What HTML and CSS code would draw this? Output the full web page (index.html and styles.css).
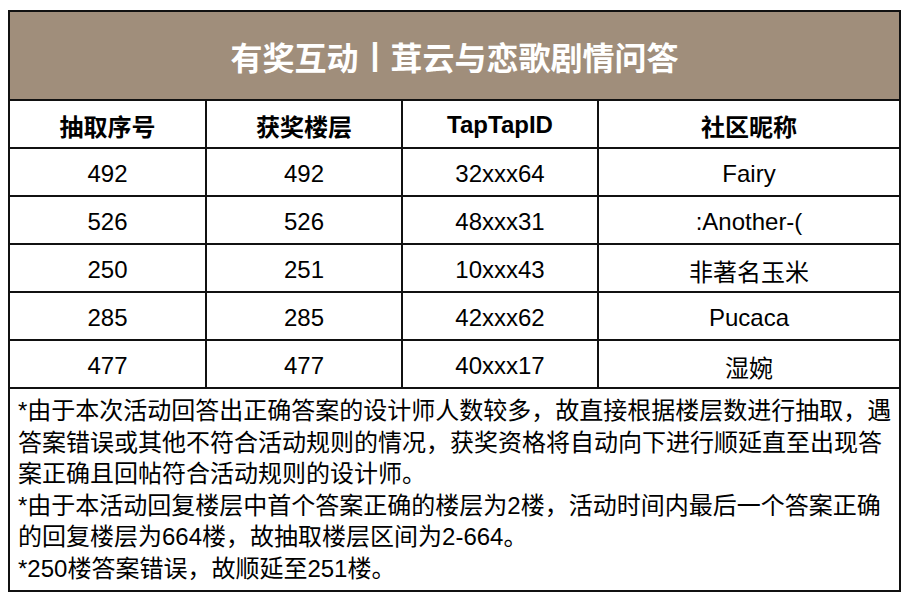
FILE: index.html
```html
<!DOCTYPE html>
<html lang="zh-CN">
<head>
<meta charset="utf-8">
<title>有奖互动｜茸云与恋歌剧情问答</title>
<link rel="stylesheet" href="styles.css">
</head>
<body>
<div class="sheet">
  <div class="title">有奖互动<span class="sep">|</span>茸云与恋歌剧情问答</div>
  <div class="grid">
    <div class="cell head">抽取序号</div>
    <div class="cell head">获奖楼层</div>
    <div class="cell head">TapTapID</div>
    <div class="cell head last">社区昵称</div>

    <div class="cell">492</div>
    <div class="cell">492</div>
    <div class="cell">32xxx64</div>
    <div class="cell last">Fairy</div>

    <div class="cell">526</div>
    <div class="cell">526</div>
    <div class="cell">48xxx31</div>
    <div class="cell last">:Another-(</div>

    <div class="cell">250</div>
    <div class="cell">251</div>
    <div class="cell">10xxx43</div>
    <div class="cell last">非著名玉米</div>

    <div class="cell">285</div>
    <div class="cell">285</div>
    <div class="cell">42xxx62</div>
    <div class="cell last">Pucaca</div>

    <div class="cell">477</div>
    <div class="cell">477</div>
    <div class="cell">40xxx17</div>
    <div class="cell last">湿婉</div>
  </div>
  <div class="note">
    <p>*由于本次活动回答出正确答案的设计师人数较多，故直接根据楼层数进行抽取，遇答案错误或其他不符合活动规则的情况，获奖资格将自动向下进行顺延直至出现答案正确且回帖符合活动规则的设计师。</p>
    <p>*由于本活动回复楼层中首个答案正确的楼层为2楼，活动时间内最后一个答案正确的回复楼层为664楼，故抽取楼层区间为2-664。</p>
    <p>*250楼答案错误，故顺延至251楼。</p>
  </div>
</div>
</body>
</html>
```

FILE: styles.css
```css
html, body {
  margin: 0;
  padding: 0;
  background: #ffffff;
}

body {
  font-family: "Liberation Sans", "Noto Sans CJK SC", sans-serif;
  color: #000000;
}

.sheet {
  margin: 10px 0 0 8px;
  width: 893px;
  border: 2px solid #111111;
  box-sizing: border-box;
}

.title {
  height: 87px;
  background: #a08e7b;
  color: #ffffff;
  font-size: 32px;
  font-weight: bold;
  display: flex;
  align-items: center;
  justify-content: center;
  border-bottom: 2px solid #111111;
}

.title .sep {
  font-family: "Liberation Sans", sans-serif;
  font-weight: bold;
  margin: 0 11px 0 12px;
  position: relative;
  top: -1px;
}

.grid {
  display: grid;
  grid-template-columns: 197px 196px 196px 300px;
  grid-auto-rows: 48px;
}

.cell {
  display: flex;
  align-items: center;
  justify-content: center;
  font-size: 24px;
  border-right: 2px solid #111111;
  border-bottom: 2px solid #111111;
  padding-top: 4px;
  box-sizing: border-box;
}

.cell.last {
  border-right: none;
}

.cell.head {
  font-weight: bold;
  padding-top: 2px;
}

.note {
  padding: 6px 4px 5px 8px;
  font-size: 24px;
  line-height: 31.6px;
}

.note p {
  margin: 0;
}
```
